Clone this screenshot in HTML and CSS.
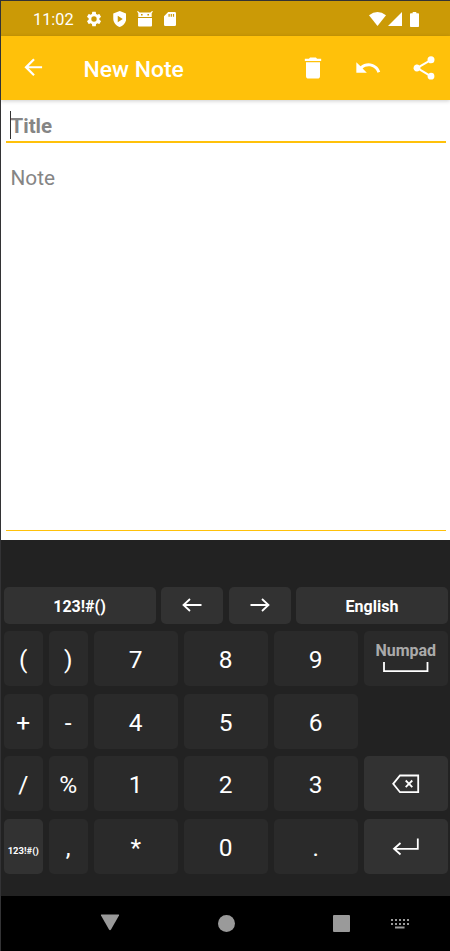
FILE: index.html
```html
<!DOCTYPE html>
<html lang="en">
<head>
<meta charset="utf-8">
<title>New Note</title>
<link rel="stylesheet" href="styles.css">
</head>
<body>
<div class="screen">
  <div class="status">
    <span class="clock">11:02</span>
    <svg class="gear" viewBox="0 0 24 24"><path d="M19.14 12.94c.04-.3.06-.61.06-.94s-.02-.64-.07-.94l2.03-1.58a.49.49 0 0 0 .12-.61l-1.92-3.32a.49.49 0 0 0-.59-.22l-2.39.96a7 7 0 0 0-1.62-.94l-.36-2.54a.48.48 0 0 0-.48-.41h-3.84a.48.48 0 0 0-.47.41l-.36 2.54c-.59.24-1.13.57-1.62.94l-2.39-.96a.49.49 0 0 0-.59.22L2.74 8.87a.48.48 0 0 0 .12.61l2.03 1.58a7 7 0 0 0 0 1.88l-2.03 1.58a.49.49 0 0 0-.12.61l1.92 3.32c.12.22.37.29.59.22l2.39-.96c.5.38 1.03.7 1.62.94l.36 2.54c.05.24.24.41.48.41h3.84c.24 0 .44-.17.47-.41l.36-2.54a7 7 0 0 0 1.62-.94l2.39.96c.22.08.47 0 .59-.22l1.92-3.32a.48.48 0 0 0-.12-.61zM12 15.6a3.6 3.6 0 1 1 0-7.2 3.6 3.6 0 0 1 0 7.2z"/></svg>
    <svg class="shield" viewBox="0 0 13 16"><path fill-rule="evenodd" d="M6.500 0 13 2.500V7.500C13 11.400 10.300 14.600 6.500 16 2.700 14.600 0 11.400 0 7.500V2.500zM4.500 4.800v6.400l5-3.200z"/></svg>
    <svg class="robot" viewBox="0 0 16 16"><path fill-rule="evenodd" d="M.1.500.9 0 2.600 1.500H13.400L15.100 0l.8.500L14.700 2.300V6H1.300V2.300zM4 3v1.500h1.600V3zm6.400 0v1.500H12V3zM1 7h14v7.500a1 1 0 0 1-1 1H2a1 1 0 0 1-1-1z"/></svg>
    <svg class="sd" viewBox="0 0 12 14"><path fill-rule="evenodd" d="M4.200 0H10.700Q12 0 12 1.300V12.700Q12 14 10.700 14H1.300Q0 14 0 12.700V4.200zM4.500 2v2.700h1.200V2zm2.200 0v2.700h1.200V2zm2.200 0v2.700h1.200V2z"/></svg>
    <svg class="wifi" viewBox="0 0 17 14"><path d="M0 3.300Q8.500-3.300 17 3.300L8.500 14z"/></svg>
    <svg class="signal" viewBox="0 0 14 14"><path d="M14 0v14H0z"/></svg>
    <svg class="battery" viewBox="0 0 9 15"><path d="M2.700 0h3.600v1.300H8.200q.8 0 .8.800v12.100q0 .8-.8.800H.8q-.8 0-.8-.8V2.100q0-.8.8-.8h1.900z"/></svg>
  </div>
  <header class="appbar">
    <svg class="back" viewBox="0 0 24 24"><path d="M20 11H7.830l5.590-5.590L12 4l-8 8 8 8 1.410-1.410L7.830 13H20z"/></svg>
    <h1>New Note</h1>
    <svg class="action" viewBox="0 0 24 24"><path d="M6 19c0 1.100.9 2 2 2h8c1.100 0 2-.9 2-2V7H6zM19 4h-3.500l-1-1h-5l-1 1H5v2h14z"/></svg>
    <svg class="action" viewBox="0 0 24 24"><path d="M12.500 8c-2.650 0-5.050.99-6.900 2.600L2 7v9h9l-3.620-3.620c1.390-1.160 3.160-1.880 5.120-1.880 3.540 0 6.550 2.310 7.600 5.500l2.370-.78C21.080 11.030 17.150 8 12.500 8z"/></svg>
    <svg class="action" viewBox="0 0 24 24"><path d="M18 16.080c-.76 0-1.440.3-1.960.77L8.910 12.700c.05-.23.090-.46.090-.7s-.04-.47-.09-.7l7.050-4.110c.54.5 1.250.81 2.040.81a3 3 0 1 0-3-3c0 .24.040.47.090.7L8.040 9.810A3 3 0 1 0 6 15c.79 0 1.500-.31 2.040-.81l7.120 4.160c-.05.21-.08.43-.08.650A2.920 2.920 0 1 0 18 16.080z"/></svg>
  </header>
  <main class="editor">
    <div class="title"><span class="caret"></span>Title</div>
    <div class="note">Note</div>
  </main>
  <section class="keyboard">
    <div class="toprow">
      <div class="key fn">123!#()</div>
      <div class="key fn"><svg class="arrow" viewBox="0 0 20 14"><path d="M19.500 7H1.500M8 1 1.500 7 8 13"/></svg></div>
      <div class="key fn"><svg class="arrow" viewBox="0 0 20 14"><path d="M.5 7h18M12 1l6.500 6-6.500 6"/></svg></div>
      <div class="key fn">English</div>
    </div>
    <div class="keys">
      <div class="key">(</div><div class="key">)</div><div class="key">7</div><div class="key">8</div><div class="key">9</div>
      <div class="key space">Numpad<svg viewBox="0 0 46 11"><path d="M1 0v9.200h43.500V0"/></svg></div>
      <div class="key">+</div><div class="key">-</div><div class="key">4</div><div class="key">5</div><div class="key">6</div><div></div>
      <div class="key">/</div><div class="key">%</div><div class="key">1</div><div class="key">2</div><div class="key">3</div>
      <div class="key fn"><svg class="erase" viewBox="0 0 28 20"><path d="M8 1.500h18.200v16.700H8L1.200 9.850zM13.700 6.500l6.600 6.600M20.300 6.500l-6.600 6.600"/></svg></div>
      <div class="key fn small">123!#()</div><div class="key">,</div><div class="key">*</div><div class="key">0</div><div class="key">.</div>
      <div class="key fn"><svg class="enter" viewBox="0 0 28 18"><path d="M25.800.5v10.300H2M8.500 5 2 10.800l6.500 5.700"/></svg></div>
    </div>
  </section>
  <nav class="navbar">
    <svg class="nav-back" viewBox="0 0 20 17"><path d="M1.500.500h17q1 0 .5 1L11 15.500q-1 1.500-2 0L1 1.500q-.5-1 .5-1z"/></svg>
    <span class="nav-home"></span>
    <span class="nav-recent"></span>
    <svg class="nav-ime" viewBox="0 0 18 11"><path d="M0 1h2v2H0zm4 0h2v2H4zm4 0h2v2H8zm4 0h2v2h-2zm4 0h2v2h-2zM0 5h2v2H0zm4 0h2v2H4zm4 0h2v2H8zm4 0h2v2h-2zm4 0h2v2h-2zM4 8.500h9.500v2H4z"/></svg>
  </nav>
</div>
</body>
</html>
```
FILE: styles.css
```css
* { box-sizing: border-box; }
body { margin: 0; font-family: Roboto, "Liberation Sans", sans-serif; }
svg { display: block; flex: none; fill: #fff; }
.screen {
  width: 450px;
  height: 951px;
  border-left: 1px solid #333335;
  border-top: 1px solid #333335;
  display: flex;
  flex-direction: column;
  overflow: hidden;
  background: #fff;
}
.status {
  height: 35px;
  flex: none;
  background: #cb9a06;
  display: flex;
  align-items: center;
  padding: 1px 31px 0 32px;
  color: #fff;
}
.clock { width: 52px; font-size: 16.300px; line-height: 20px; padding-top: 1px; }
.gear { width: 18px; height: 18px; }
.shield { width: 13.500px; height: 16px; margin-left: 9.500px; }
.robot { width: 16px; height: 16px; margin-left: 10.800px; }
.sd { width: 12px; height: 14px; margin-left: 11.500px; }
.wifi { width: 17px; height: 14px; margin-left: auto; }
.signal { width: 14px; height: 14px; margin: 0 8px 0 2px; }
.battery { width: 9px; height: 15px; }
.appbar {
  height: 64px;
  flex: none;
  background: #ffc10a;
  display: flex;
  align-items: center;
  padding: 0 12.500px 1px 18.500px;
  box-shadow: 0 1px 4px rgba(0, 0, 0, .2);
  color: #fff;
}
.back { width: 26.500px; height: 26.500px; }
.appbar h1 { margin: 5px auto 0 37.500px; font-size: 22.900px; line-height: 28px; font-weight: 500; }
.action { width: 28px; height: 28px; }
.action + .action { margin-left: 27.200px; }
.editor {
  height: 440px;
  flex: none;
  padding: 8px 4px 9px 5px;
  display: flex;
  flex-direction: column;
  color: #858585;
  font-size: 20.800px;
}
.title {
  height: 35px;
  border-bottom: 2px solid #ffc10a;
  padding: 4px 0 0 4.500px;
  line-height: 28px;
  font-weight: 700;
  font-size: 20.500px;
  position: relative;
}
.caret { position: absolute; left: 4px; top: 3px; width: 1px; height: 28px; background: #333; }
.note { flex: 1; border-bottom: 1px solid #ffc10a; padding: 21px 0 0 4.500px; line-height: 28px; }
.keyboard { height: 356px; flex: none; background: #222; padding: 47px 2px 0 2.500px; color: #fff; }
.toprow { display: grid; grid-template-columns: 152px 62px 62px 152px; gap: 5.500px; height: 36.500px; margin-bottom: 7.500px; }
.keys { display: grid; grid-template-columns: 39.500px 39.500px repeat(4, 84.500px); grid-auto-rows: 55px; gap: 7.500px 5.500px; }
.key {
  background: #2a2a2a;
  border-radius: 5px;
  display: flex;
  align-items: center;
  justify-content: center;
  font-size: 24.500px;
  line-height: 28px;
  padding-top: 3px;
}
.fn { background: #323232; font-size: 16px; font-weight: 700; }
.small { font-size: 9.500px; padding-top: 9px; }
.space { flex-direction: column; align-items: center; justify-content: flex-start; padding-top: 10px; font-size: 16px; line-height: 20px; font-weight: 700; color: #aaa; }
.key svg { fill: none; stroke: #fff; stroke-width: 1.800; }
.space svg { width: 46px; height: 11px; margin-top: 1px; }
.arrow { width: 20px; height: 14px; margin-top: -4px; }
.erase { width: 28px; height: 20px; margin-top: -3px; }
.enter { width: 28px; height: 18px; margin-top: -2px; }
.navbar { flex: 1; background: #000; display: flex; align-items: center; padding-left: 99px; }
.navbar svg { fill: #9a9a9a; }
.nav-back { width: 20px; height: 17px; margin-top: -3px; }
.nav-home { width: 17px; height: 17px; border-radius: 50%; background: #9a9a9a; margin-left: 97.500px; }
.nav-recent { width: 17px; height: 17px; border-radius: 1px; background: #9a9a9a; margin-left: 98.500px; }
.nav-ime { width: 18px; height: 11px; margin-left: 40.500px; }
```
